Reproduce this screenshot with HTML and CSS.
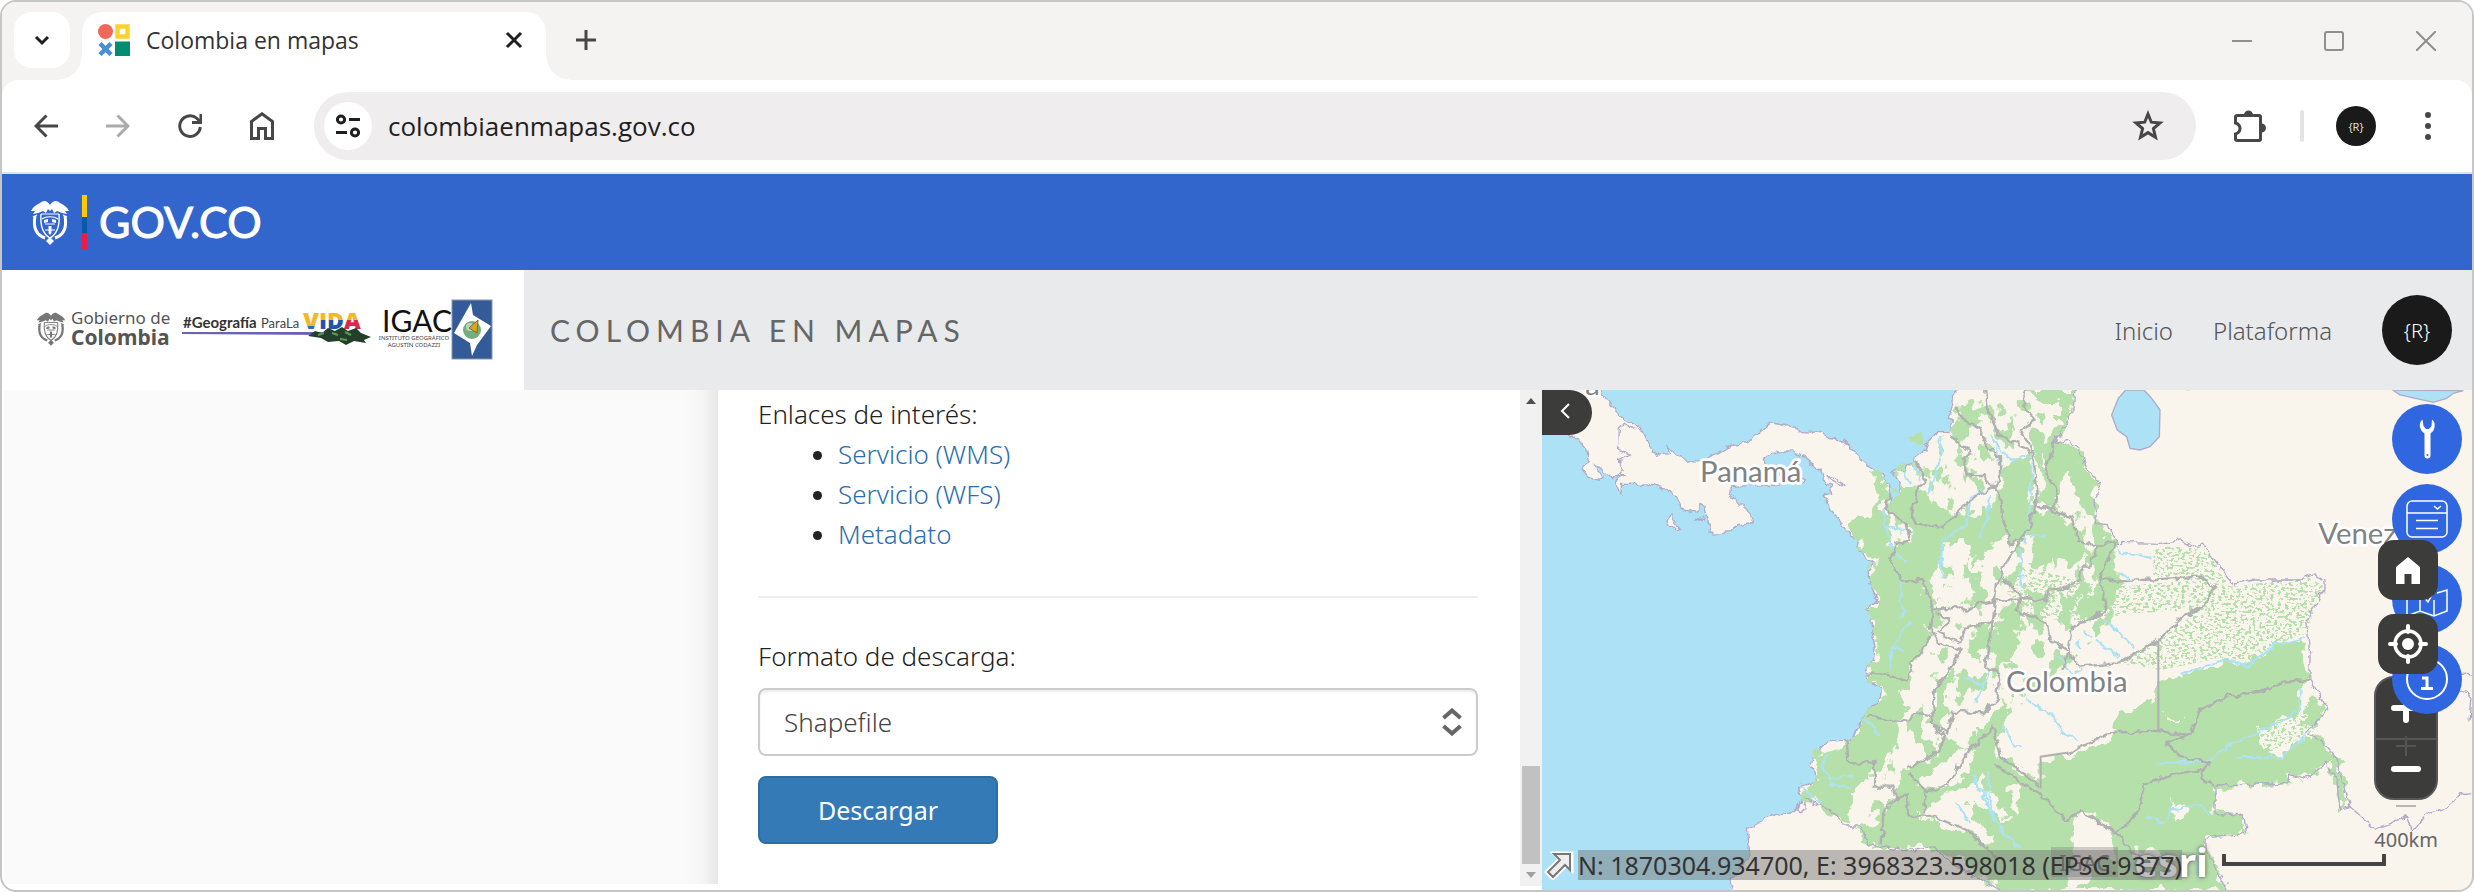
FILE: index.html
```html
<!DOCTYPE html>
<html lang="es">
<head>
<meta charset="utf-8">
<title>Colombia en mapas</title>
<link rel="stylesheet" href="styles.css">
</head>
<body>
<svg class="defs" aria-hidden="true">
  <defs>
    <symbol id="arms" viewBox="0 0 40 46">
      <path d="M20 6 C17 1 13 1 10 4 C6 6 3 8 1 12 L5 12 L3 15 L8 14 L13 12 L16 14 L18 10 L20 12 L22 10 L24 14 L27 12 L32 14 L37 15 L35 12 L39 12 C37 8 34 6 30 4 C27 1 23 1 20 6Z" fill="currentColor"/>
      <path d="M3 18 L7 16 M37 18 L33 16 M11 15 L29 15 M12 20 C16 17 24 17 28 20 M15 25 H25 M15 31 H25" fill="none" stroke="currentColor" stroke-width="1.2"/>
      <path d="M11 15 C10 27 13 35 20 39 C27 35 30 27 29 15" fill="none" stroke="currentColor" stroke-width="1.4"/>
      <path d="M5 17 C3 28 6 36 15 39 M35 17 C37 28 34 36 25 39" fill="none" stroke="currentColor" stroke-width="3"/>
      <path d="M14 21 L18 20 L18 23 L14 24Z M26 21 L22 20 L22 23 L26 24Z M18.500 27 H21.500 V34 L20 36 L18.500 34Z M20 38 L24 42 L20 46 L16 42Z" fill="currentColor"/>
    </symbol>
    <linearGradient id="vida-v" x2="0" y2="1"><stop offset="0.7" stop-color="#f7b52c"/><stop offset="0.7" stop-color="#2f6bb8"/></linearGradient>
    <linearGradient id="vida-d" x2="0" y2="1"><stop offset="0.5" stop-color="#f7b52c"/><stop offset="0.5" stop-color="#1e57a8"/></linearGradient>
    <linearGradient id="vida-a" x2="0" y2="1"><stop offset="0.5" stop-color="#f7b52c"/><stop offset="0.5" stop-color="#d8294a"/></linearGradient>
  </defs>
</svg>

<div class="window">
  <header class="tabstrip">
    <button class="tab-search" aria-label="Buscar pestañas">
      <svg width="20" height="20" viewBox="0 0 20 20"><path d="M4 7 L10 13 L16 7" class="ink-thick"/></svg>
    </button>
    <div class="tab">
      <svg class="favicon" width="32" height="32" viewBox="0 0 32 32">
        <circle cx="7.500" cy="7.500" r="7.500" fill="#f0685a"/>
        <path d="M19.500 2.500 H29.500 V12.500 H19.500Z" fill="#fff" stroke="#fdd22f" stroke-width="4.500"/>
        <path d="M2 19.500 L13 30.500 M13 19.500 L2 30.500" stroke="#4a8fd4" stroke-width="4.500"/>
        <path d="M17 17.500 H32 V32 H17Z" fill="#018d70"/>
      </svg>
      <span class="tab-title">Colombia en mapas</span>
      <button class="plain" aria-label="Cerrar pestaña">
        <svg width="24" height="24" viewBox="0 0 24 24"><path d="M5 5 L19 19 M19 5 L5 19" class="ink-thick"/></svg>
      </button>
    </div>
    <button class="plain new-tab" aria-label="Nueva pestaña">
      <svg width="24" height="24" viewBox="0 0 24 24"><path d="M12 2 V22 M2 12 H22" class="ink"/></svg>
    </button>
    <div class="window-controls">
      <button class="plain" aria-label="Minimizar"><svg width="20" height="20" viewBox="0 0 20 20"><path d="M0 10 H20" class="ctl"/></svg></button>
      <button class="plain" aria-label="Maximizar"><svg width="20" height="20" viewBox="0 0 20 20"><rect x="1" y="1" width="18" height="18" rx="2" class="ctl"/></svg></button>
      <button class="plain" aria-label="Cerrar"><svg width="20" height="20" viewBox="0 0 20 20"><path d="M0 0 L20 20 M20 0 L0 20" class="ctl"/></svg></button>
    </div>
  </header>

  <div class="toolbar-bg">
    <div class="toolbar">
      <div class="nav-buttons">
        <button class="plain" aria-label="Atrás"><svg width="24" height="28" viewBox="0 0 24 28"><path d="M24 14 H2 M12.500 3.500 L2 14 L12.500 24.500" class="ink"/></svg></button>
        <button class="plain faded" aria-label="Adelante"><svg width="24" height="28" viewBox="0 0 24 28"><path d="M0 14 H22 M11.500 3.500 L22 14 L11.500 24.500" class="ink"/></svg></button>
        <button class="plain" aria-label="Recargar"><svg width="24" height="28" viewBox="0 0 24 28"><path d="M22.300 15 A10.300 10.300 0 1 1 19 6.500 L22 9.500 M23 2 V10.500 H14" class="ink"/></svg></button>
        <button class="plain" aria-label="Inicio"><svg width="24" height="28" viewBox="0 0 24 28"><path d="M1.500 9.500 L12 1.800 L22.500 9.500 V26.500 H15.500 V16.500 H8.500 V26.500 H1.500Z" class="ink"/></svg></button>
      </div>
      <div class="omnibox">
        <button class="site-info" aria-label="Información del sitio">
          <svg width="24" height="24" viewBox="0 0 24 24"><path d="M13 5.500 H24 M0 18.500 H11" class="ink-thick"/><circle cx="5" cy="5.500" r="3.600" class="ink-thick"/><circle cx="19" cy="18.500" r="3.600" class="ink-thick"/></svg>
        </button>
        <input class="url" type="text" aria-label="Dirección" value="colombiaenmapas.gov.co">
        <button class="plain" aria-label="Guardar en favoritos">
          <svg width="32" height="32" viewBox="0 0 32 32"><path d="M16 4 L19.300 12.200 L28 12.900 L21.400 18.600 L23.500 27.200 L16 22.600 L8.500 27.200 L10.600 18.600 L4 12.900 L12.700 12.200Z" class="star"/></svg>
        </button>
      </div>
      <button class="plain ext" aria-label="Extensiones">
        <svg width="32" height="32" viewBox="0 0 32 32"><path d="M3.500 5.500 H25 Q26.500 5.500 26.500 7 V29 Q26.500 30.500 25 30.500 H3.500 Q1.500 30.500 1.500 29 V24 Q6 22.500 6 18.500 T1.500 13 V7 Q1.500 5.500 3.500 5.500Z" class="ink"/><path d="M10 5 A4.500 4.500 0 0 1 19 5Z M27.500 13.500 A4.500 4.500 0 0 1 27.500 22.500Z" fill="#474747"/></svg>
      </button>
      <span class="divider"></span>
      <button class="profile" aria-label="Perfil">{R}</button>
      <button class="plain" aria-label="Menú">
        <svg width="8" height="28" viewBox="0 0 8 28"><g fill="#474747"><circle cx="4" cy="3" r="3"/><circle cx="4" cy="14" r="3"/><circle cx="4" cy="25" r="3"/></g></svg>
      </button>
    </div>
  </div>

  <div class="govbar">
    <svg class="gov-arms" width="40" height="46"><use href="#arms"/></svg>
    <span class="gov-flag"></span>
    <span class="gov-name">GOV.CO</span>
  </div>

  <div class="sitebar">
    <div class="brand">
      <svg class="brand-art" width="462" height="64" viewBox="0 0 462 64" role="img" aria-label="Gobierno de Colombia, IGAC">
        <svg x="2" y="13" width="30" height="35" color="#777"><use href="#arms"/></svg>
        <g class="brand-gov"><text x="37" y="26">Gobierno de</text><text x="37" y="47" class="strong">Colombia</text></g>
        <text x="149" y="30" class="brand-tag strong">#Geografía</text>
        <text x="227" y="30" class="brand-para">ParaLa</text>
        <path d="M148 34 H290 V37 L148 36Z" fill="#6c62b4"/>
        <g class="brand-vida"><text x="269" y="31" fill="url(#vida-v)">V</text><text x="285" y="31" fill="url(#vida-d)">I</text><text x="293" y="31" fill="url(#vida-d)">D</text><text x="310" y="31" fill="url(#vida-a)">A</text></g>
        <path d="M274 38 L281 33 L288 35 L294 30 L301 33 L308 29 L314 33 L322 30 L327 35 L337 39 L330 42 L332 45 L320 43 L312 47 L305 43 L294 44 L287 40Z" fill="#23402a"/>
        <path d="M284 37 L290 35 M298 35 L304 37 M311 34 L317 37 M306 41 L313 42" stroke="#5f9b4c" stroke-width="2"/>
        <text x="348" y="34" class="brand-igac">IGAC</text>
        <text x="380" y="42" class="brand-sub">INSTITUTO GEOGRÁFICO</text>
        <text x="380" y="49" class="brand-sub">AGUSTÍN CODAZZI</text>
        <g transform="translate(30 0)">
          <rect x="388" y="2" width="40" height="59" fill="#335b97" stroke="#8c96a8"/>
          <path d="M407 5 L409 17 L427 28 L413 47 L408 58 L406 45 L390 35Z" fill="#fff"/>
          <circle cx="408" cy="32" r="9" fill="#74ad80"/><circle cx="406" cy="29" r="4" fill="#b9d6bc"/>
          <path d="M405 30 L414 22 L413 35Z" fill="#dba51f" stroke="#7d6a20"/>
        </g>
      </svg>
    </div>
    <h1 class="site-title">COLOMBIA EN MAPAS</h1>
    <nav class="site-nav">
      <a href="#">Inicio</a>
      <a href="#">Plataforma</a>
      <button class="user">{R}</button>
    </nav>
  </div>

  <main class="content">
    <div class="side"></div>
    <section class="panel">
      <p class="line">Enlaces de interés:</p>
      <ul class="links">
        <li><a href="#">Servicio (WMS)</a></li>
        <li><a href="#">Servicio (WFS)</a></li>
        <li><a href="#">Metadato</a></li>
      </ul>
      <hr class="rule">
      <label class="line" for="formato">Formato de descarga:</label>
      <div class="select-wrap">
        <select id="formato" class="select"><option>Shapefile</option></select>
        <svg class="select-arrows" width="20" height="28" viewBox="0 0 20 28"><path d="M1.500 10 L10 2.500 L18.500 10 M1.500 18 L10 25.500 L18.500 18"/></svg>
      </div>
      <button class="download">Descargar</button>
    </section>
    <div class="scrollbar" aria-hidden="true">
      <svg width="10" height="6" viewBox="0 0 10 6"><path d="M0 6 L5 0 L10 6Z" fill="#505050"/></svg>
      <span class="thumb"></span>
      <svg width="10" height="6" viewBox="0 0 10 6"><path d="M0 0 L5 6 L10 0Z" fill="#a0a0a0"/></svg>
    </div>

    <section class="map" aria-label="Mapa">
      <svg class="map-art" viewBox="126 30 2790 1500" preserveAspectRatio="xMidYMin slice">
        <defs>
          <filter id="rough" x="0" y="0" width="2916" height="1530" filterUnits="userSpaceOnUse">
            <feTurbulence type="fractalNoise" baseFrequency="0.025" numOctaves="3" seed="4"/>
            <feDisplacementMap in="SourceGraphic" scale="60" xChannelSelector="R" yChannelSelector="G"/>
          </filter>
          <filter id="wobble" x="0" y="0" width="2916" height="1530" filterUnits="userSpaceOnUse">
            <feTurbulence type="fractalNoise" baseFrequency="0.04" numOctaves="2" seed="9"/>
            <feDisplacementMap in="SourceGraphic" scale="24" xChannelSelector="R" yChannelSelector="G"/>
          </filter>
          <filter id="speckle" x="0" y="0" width="2916" height="1530" filterUnits="userSpaceOnUse" color-interpolation-filters="sRGB">
            <feTurbulence type="fractalNoise" baseFrequency="0.09 0.13" numOctaves="2" seed="3"/>
            <feColorMatrix values="0 0 0 0 0.71  0 0 0 0 0.88  0 0 0 0 0.67  16 0 0 0 -8.500"/>
            <feComposite in2="SourceGraphic" operator="in"/>
          </filter>
          <filter id="patches" x="0" y="0" width="2916" height="1530" filterUnits="userSpaceOnUse" color-interpolation-filters="sRGB">
            <feTurbulence type="fractalNoise" baseFrequency="0.022 0.016" numOctaves="4" seed="12"/>
            <feColorMatrix values="0 0 0 0 0.71  0 0 0 0 0.88  0 0 0 0 0.67  30 0 0 0 -17.200"/>
            <feComposite in2="SourceGraphic" operator="in"/>
          </filter>
        </defs>
        <rect x="126" y="30" width="2790" height="1500" fill="#ade1f5"/>
        <path class="land" d="M300 20 L302 42 340 85 365 112 400 135 430 155 445 190 455 215 480 225 510 220 500 195 530 225 560 243 600 242 640 228 680 200 740 188 770 165 812 128 850 135 890 142 895 155 960 157 1000 175 1030 185 1060 210 1085 240 1112 262 1140 280 1165 310 1170 345 1178 372 1200 365 1200 310 1175 272 1210 268 1240 240 1275 210 1285 180 1310 155 1350 155 1360 120 1345 115 1362 70 1365 20 2930 20 2930 1540 700 1540 690 1500 750 1430 742 1345 790 1320 830 1305 870 1300 895 1280 910 1255 895 1220 950 1205 935 1150 945 1115 985 1085 1040 1085 1060 1075 1080 1030 1100 1000 1140 960 1145 925 1105 895 1095 875 1120 845 1125 800 1115 750 1112 695 1095 690 1115 680 1132 660 1105 600 1105 570 1120 550 1100 535 1070 505 1075 485 1045 455 1025 430 990 385 970 345 995 340 990 315 970 300 960 270 920 240 880 213 830 213 790 240 800 262 860 300 830 312 690 320 690 345 740 385 757 415 755 430 705 440 690 455 635 460 625 425 615 375 600 370 590 400 545 390 525 345 490 325 440 312 365 313 362 345 345 305 370 290 330 290 285 255 310 300 265 290 248 270 265 240 260 210 235 180 205 160 110 130 110 20Z"/>
        <path class="land" d="M515 403 L525 430 538 445 510 445 500 420Z M585 420 L612 410 608 418Z M900 288 L916 300 908 314 896 308Z M980 290 L1005 292 1033 320 1010 308Z"/>
        <path class="coast" d="M345 305 L370 270 358 240 388 225 355 205 358 145 370 130 400 145 M905 1255 L890 1290 905 1300 912 1265"/>

        <path class="patches" d="M1200 180 L1500 60 1620 60 1700 200 1850 480 1840 720 1700 860 1520 1010 1400 1230 1250 1380 1100 1330 1150 1160 1290 900 1270 600 1160 430Z"/>
        <g class="forest">
          <path d="M1112 262 L1150 300 1172 340 1150 385 1165 430 1180 500 1200 600 1270 600 1300 690 1280 720 1295 780 1250 830 1230 890 1205 940 1225 1000 1190 1030 1180 1100 1130 1180 1100 1200 1060 1230 1050 1300 1060 1335 1035 1335 990 1290 920 1255 905 1220 960 1200 942 1150 955 1115 1000 1100 1050 1085 1070 1070 1090 1030 1105 1000 1150 960 1150 925 1110 895 1105 875 1128 845 1132 800 1120 750 1118 695 1110 690 1125 680 1138 660 1112 600 1115 570 1125 550 1105 535 1080 505 1082 485 1050 455 1070 400 1090 415 1120 390 1145 355 1112 300Z"/>
          <path d="M1205 310 L1245 320 1300 350 1320 395 1390 410 1440 400 1500 350 1520 470 1460 510 1430 560 1410 490 1350 490 1320 540 1290 600 1200 600 1175 520 1195 490 1235 480 1220 440 1165 400Z"/>
          <path d="M1365 80 L1420 60 1450 110 1400 150Z M1580 30 L1725 30 1710 120 1670 185 1655 280 1630 310 1630 190 1680 130 1680 60 1610 60Z"/>
          <path d="M1660 190 L1710 185 1760 270 1795 300 1785 370 1790 435 1825 440 1845 490 1850 600 1800 620 1780 560 1780 500 1820 470 1750 390 1710 280 1670 330 1650 390 1630 310Z"/>
          <path d="M1510 260 L1560 230 1595 240 1600 380 1680 410 1730 440 1750 490 1770 510 1730 560 1670 540 1620 570 1595 530 1610 490 1590 460 1530 490 1505 420 1490 350Z"/>
          <path d="M1800 610 L1850 600 1870 620 1820 700 1740 720 1715 700Z M1530 650 L1570 670 1550 790 1520 850 1490 870 1490 760Z M1430 730 L1480 730 1440 840 1405 830Z"/>
          <path d="M1340 870 L1370 870 1340 950 1330 1050 1290 1030 1300 950Z M1500 960 L1530 980 1500 1060 1480 1140 1430 1230 1280 1290 1250 1310 1180 1240 1220 1160 1300 1150 1330 1060 1400 1110Z"/>
          <path d="M1180 1250 L1220 1240 1240 1310 1320 1330 1400 1350 1440 1380 1440 1440 1350 1420 1250 1400 1150 1410 1095 1390 1080 1350 1150 1310Z"/>
          <path d="M1980 905 L2050 880 2180 840 2250 858 2320 795 2415 780 2430 900 2402 930 2400 990 2350 1030 2270 1045 2280 1100 2340 1130 2420 1065 2460 1085 2505 1130 2550 1275 2520 1290 2510 1190 2480 1145 2440 1170 2405 1200 2365 1180 2365 1210 2145 1215 2140 1300 2230 1305 2240 1365 2115 1372 2115 1400 2180 1530 1500 1530 1380 1440 1400 1350 1450 1390 1480 1370 1390 1290 1350 1260 1440 1160 1480 1130 1580 1180 1625 1210 1625 1135 1720 1130 1850 1060 1830 1040 1880 1000 1970 960Z"/>
          <path d="M2420 960 L2450 940 2480 985 2430 1040 2410 1050Z"/>
        </g>
        <path class="clearing" d="M1720 1290 Q1760 1280 1790 1310 L1830 1370 1860 1450 1800 1440 1730 1530 1700 1530 1725 1400Z M1440 1180 L1480 1240 1530 1330 1470 1300 1400 1260Z M1520 1220 L1560 1230 1545 1310Z M1990 1010 L2040 1010 2040 1020 1990 1020Z M1890 1410 L1950 1400 1990 1430 1920 1440Z M2010 1250 L2060 1290 2030 1330Z"/>
        <path class="clearing" d="M1330 490 L1410 490 1400 560 1330 560Z M1420 360 L1460 360 1450 420 1420 400Z M1340 1130 L1440 1100 1400 1190 1320 1220 1250 1210Z M1350 1230 L1420 1220 1400 1320 1280 1300Z"/>
        <path class="speckle" d="M1830 620 L2100 600 2200 620 2420 590 2475 620 2445 680 2420 760 2310 800 2250 850 2180 830 1980 870 1850 850 1990 770 2100 690 1900 700 1770 720Z M1960 500 L2110 500 2190 610 1960 590Z M2270 1040 L2400 1000 2480 960 2450 1050 2300 1120Z M1560 560 L1830 620 1760 720 1640 720 1520 640Z"/>

        <path class="river" d="M1320 165 L1325 220 1310 280 1282 350 M1412 350 L1400 430 1330 480 1322 540 1328 595 M1470 345 L1465 410 1435 475 M1150 390 L1155 430 1175 500 1215 550 M1160 440 L1240 455 M1205 610 L1200 660 1215 690 1200 715 M1230 725 L1180 800 1165 870 M1185 800 L1210 815 M985 1120 L965 1160 1000 1215 1050 1225 M980 1195 L1055 1190 M905 1220 L960 1270 M1095 1020 L1135 1060 M1470 870 L1455 910 1428 965 M1390 890 L1430 910 1455 910 M1420 1185 L1470 1270 1500 1350 M1465 1180 L1470 1260 M1370 1270 L1410 1330 M1210 270 L1230 315 M1240 250 L1260 300"/>
        <path class="river" d="M1470 160 L1510 220 1545 245 1600 220 M1480 170 L1505 260 M1595 240 L1590 430 1570 490 M1500 310 L1410 350 M1562 510 L1565 620 M1810 715 L1850 750 1905 805 M1750 750 L1775 770 M1790 785 L1860 830 M1730 780 L1735 805 M1660 820 L1720 880 1750 865 M1580 960 L1650 1000 1690 1060 1740 1080 M1510 1030 L1540 1095 1565 1100 M1420 1190 L1490 1330 1560 1410 M2045 880 L2180 840 2250 858 2320 795 2415 775 M2402 925 L2400 990 2330 1030 2240 1070 2165 1110 2120 1145 1975 1150 M2210 1130 L2350 1135 2415 1065 M1945 1310 L1990 1330 2020 1290 2100 1275 2130 1310 M1855 495 L1865 520 1955 530 M1860 580 L1890 600 M1590 470 L1635 465"/>
        <path class="lake" d="M1877 30 L1932 30 1955 55 1980 90 1978 170 1950 200 1920 210 1890 205 1880 170 1852 150 1835 105 1855 55Z M2678 30 L2700 45 2800 67 2840 55 2860 40 2890 32Z"/>

        <g class="dept">
          <path d="M1455 30 L1460 80 1500 170 1550 190 1600 220 1610 350 1590 440 1520 545 1490 620 1475 750 1455 860 1500 880 1490 960 1450 1000 1360 995 1340 1060 1295 1030 1305 930 1385 810 1320 790 1290 740 1300 690 1270 600 1205 605 1170 540 1190 490 1230 485 1220 430 1155 385 1172 345"/>
          <path d="M1370 85 L1390 120 1440 145 1460 200 1500 230 1500 310 1430 345 1370 400 1325 440 1250 435 1235 410 1250 335 1275 300 1245 240 M1350 165 L1415 215 1390 240 1400 285 1450 285 1470 310 1505 360 1510 420 1530 490 1580 465"/>
          <path d="M1580 30 L1565 60 1600 120 1560 150 1600 215 M1660 190 L1635 280 1670 330 1665 385 1610 380 1710 410 1740 480 1790 500 1845 485 M1790 500 L1770 560 1745 560 1740 600 1690 630 1650 625 1640 665 1560 650 1510 590"/>
          <path d="M1845 490 L1800 590 1850 605 2100 590 2145 620 2110 680 2050 710 1975 780 1850 850 1740 860 1705 815 1720 740 1820 690 1800 590 M1705 815 L1690 870 M1305 690 L1360 680 1400 695 1440 670 1560 655 1550 690 1640 730 1650 780 1700 810 M1310 700 L1350 720 1315 760 1380 790 1395 745 1480 725"/>
          <path d="M1100 880 L1170 885 1220 905 1240 870 1230 850 1260 820 1295 760 M1100 1010 L1220 1025 1245 1000 1295 1010 M1040 1085 L1045 1145 1075 1155 1105 1140 1125 1150 1125 1220 1180 1220 1190 1250 1150 1300 1145 1390 M1190 1255 L1220 1245 1225 1310 1300 1310 1400 1350 1440 1390 1490 1430 M1225 1180 L1280 1235 1340 1215 1400 1120 1480 1040 1500 1130 1620 1220 M1280 1235 L1270 1300 M1225 1165 L1320 1110 1330 1065 1300 1040"/>
          <path d="M1700 1120 L1820 1060 1960 1052 2070 1065 2100 990 2180 950 2280 935 2350 905 2430 900 M2070 1065 L1995 1090 2050 1135 2125 1145 2100 1190 2140 1215 M2105 1170 L2000 1190 1935 1215 1915 1290 1850 1360 1740 1290 1700 1325 1640 1260 1480 1150 M1850 1360 L1900 1420 1990 1460"/>
        </g>
        <path class="meridian" d="M1975 785 V1052 M1622 1225 V1130 L1700 1118"/>
        <path class="coast" d="M1725 30 L1718 100 1660 190 1710 180 1735 205 1760 270 1800 310 1785 360 1790 437 1825 440 1850 487 1980 490 2040 480 2080 500 2110 495 2200 612 2260 600 2400 600 2440 585 2475 600 2475 630 2445 680 2420 720 2430 830 2430 900 2485 985 2415 1060 2460 1080 2505 1130 2550 1280 2520 1288 2510 1200 2480 1145 2420 1195 2365 1180 2365 1210 2145 1215 2145 1300 2230 1305 2240 1360 2115 1372 2115 1400 2180 1530 M910 1255 L990 1290 1035 1335 1075 1335 1095 1360 1100 1393 1240 1412 1300 1400 1370 1460 1500 1530 M2550 1280 L2625 1345 2670 1330 2720 1310 2735 1355 2780 1300 2840 1280 2880 1245 2916 1240 M2880 882 L2916 885 M2880 930 L2916 950 2910 1025"/>
        <g class="place">
          <text x="600" y="305">Panamá</text>
          <text x="1518" y="937">Colombia</text>
          <text x="2455" y="493">Venezuela</text>
          <text x="256" y="46">a</text>
        </g>
      </svg>

      <button class="collapse" aria-label="Contraer panel"><svg width="10" height="16" viewBox="0 0 10 16"><path d="M9 1 L2 8 L9 15"/></svg></button>

      <div class="zoom">
        <button aria-label="Acercar"><svg width="30" height="30" viewBox="0 0 30 30"><path d="M3 15 H27 M15 3 V27"/></svg></button>
        <button aria-label="Alejar"><svg width="30" height="30" viewBox="0 0 30 30"><path d="M3 15 H27"/></svg></button>
        <svg class="zoom-ghost" width="20" height="72" viewBox="0 0 20 72"><path d="M0 11 H20 M10 1 V21" stroke="#555"/><path d="M0 71 H20" stroke="#b8b6b2"/></svg>
      </div>

      <div class="tools">
        <button aria-label="Herramientas"><svg width="20" height="42" viewBox="0 0 20 42"><path d="M5.500 1.500 Q2 4 3 9.500 Q3.800 13 7.500 15.500 V37.500 Q7.500 40.500 10.500 40.500 Q13.500 40.500 13.500 37.500 V15.500 Q17 13 17.500 9.500 Q18.500 4 15 1.500 L14.500 8 L12 11 H9 L6.500 8Z" fill="#fff"/><circle cx="10.500" cy="37" r="1" fill="#3067e0"/></svg></button>
        <button aria-label="Leyenda"><svg width="42" height="38" viewBox="0 0 42 38" class="thin"><rect x="1" y="1" width="40" height="36" rx="5"/><path d="M1 13 H41 M10 20.500 H32 M10 28.500 H32 M28 6 L31.500 9 L35 6"/></svg></button>
        <button aria-label="Mapas"><svg width="42" height="42" viewBox="0 0 42 42" class="thin"><path d="M1 12 V38 L14 33 L28 38 L41 33 V12 L31 15 M14 18 V33 M28 22 V38 M16 17 L22 24 L30 10"/></svg></button>
        <button aria-label="Información"><svg width="42" height="42" viewBox="0 0 42 42" class="info"><circle cx="21" cy="21" r="20"/><path d="M16 20 H21 V30 M15 30.500 H27 M19 12.500 H22"/></svg></button>
      </div>

      <div class="quick">
        <button aria-label="Vista inicial"><svg width="26" height="28" viewBox="0 0 26 28"><path d="M1 11 L13 1 L25 11 V28 H16.500 V18 H9.500 V28 H1Z" fill="#fff"/></svg></button>
        <button aria-label="Mi ubicación"><svg width="40" height="40" viewBox="0 0 40 40"><circle cx="20" cy="20" r="13" fill="none" stroke="#fff" stroke-width="3.500"/><circle cx="20" cy="20" r="6" fill="#fff"/><path d="M20 2 V8 M20 32 V38 M2 20 H8 M32 20 H38" stroke="#fff" stroke-width="4" stroke-linecap="round"/></svg></button>
      </div>

      <div class="attribution">
        <span class="source">IGAC</span>
        <span class="esri">esri</span>
      </div>
      <div class="coords">
        <svg width="30" height="30" viewBox="0 0 30 30"><path d="M9 3 H28 V21 L22 16 L9 29 L2 22 L15 9Z" fill="#f4f4f4" stroke="#fff" stroke-width="3"/><path d="M10 4 H26 V20 L21 15 L9 27 L4 22 L16 10Z" fill="#eee" stroke="#777" stroke-width="2"/></svg>
        <span class="coords-text">N: 1870304.934700, E: 3968323.598018 (EPSG:9377)</span>
      </div>
      <div class="scale"><span class="scale-label">400km</span><span class="scale-line"></span></div>
    </section>
  </main>
</div>
</body>
</html>
```

FILE: styles.css
```css
* { box-sizing: border-box; }

body {
  margin: 0;
  background: #fff;
  color: #333;
  font-family: "Noto Sans", "Open Sans", sans-serif;
  font-size: 26px;
}

button, input, select { font: inherit; }
button { padding: 0; border: 0; cursor: pointer; }
svg { display: block; flex: none; }
a { text-decoration: none; }

.defs { position: absolute; width: 0; height: 0; }

.window {
  display: flex;
  flex-direction: column;
  min-height: 100vh;
  border: 2px solid #c6c6c6;
  border-radius: 16px;
  background: #fff;
  overflow: hidden;
}

.plain {
  display: grid;
  place-items: center;
  flex: none;
  background: none;
}
.ink { fill: none; stroke: #474747; stroke-width: 3; }
.ink-thick { fill: none; stroke: #1f1f1f; stroke-width: 3; }
.ctl { fill: none; stroke: #8f8f8f; stroke-width: 2; }
.star { fill: none; stroke: #474747; stroke-width: 3; }
.faded { opacity: 0.45; }

/* Browser chrome */
.tabstrip {
  display: flex;
  height: 78px;
  padding: 10px 36px 0 12px;
  background: #f4f3f1;
}
.tab-search {
  display: grid;
  place-items: center;
  width: 56px;
  height: 56px;
  margin-right: 12px;
  border-radius: 18px;
  background: #fff;
}
.tab {
  position: relative;
  display: flex;
  align-items: center;
  width: 464px;
  padding: 0 20px 12px 16px;
  border-radius: 20px 20px 0 0;
  background: #fff;
}
.tab::before, .tab::after {
  content: "";
  position: absolute;
  bottom: 0;
  width: 24px;
  height: 24px;
}
.tab::before {
  right: 100%;
  background: radial-gradient(circle at 0 0, transparent 23px, #fff 24px);
}
.tab::after {
  left: 100%;
  background: radial-gradient(circle at 100% 0, transparent 23px, #fff 24px);
}
.tab-title {
  flex: 1;
  margin-left: 16px;
  color: #333;
  font-family: "Open Sans", sans-serif;
  font-size: 23px;
}
.new-tab { height: 56px; margin-left: 28px; }
.window-controls {
  display: flex;
  gap: 72px;
  height: 58px;
  margin-left: auto;
}

.toolbar-bg { background: #f4f3f1; }
.toolbar {
  display: flex;
  align-items: center;
  height: 94px;
  padding: 0 40px 0 32px;
  border-bottom: 2px solid #dfe3e3;
  border-radius: 16px 16px 0 0;
  background: #fff;
}
.nav-buttons { display: flex; gap: 48px; margin-right: 40px; }
.omnibox {
  display: flex;
  align-items: center;
  flex: 1;
  height: 68px;
  padding: 0 32px 0 10px;
  border-radius: 34px;
  background: #efedee;
}
.site-info {
  display: grid;
  place-items: center;
  width: 48px;
  height: 48px;
  border-radius: 50%;
  background: #fff;
}
.url {
  flex: 1;
  min-width: 0;
  margin-left: 16px;
  padding: 0;
  border: 0;
  outline: 0;
  background: none;
  color: #1f1f1f;
  font-family: "Open Sans", sans-serif;
  font-size: 26px;
}
.ext { margin-left: 38px; }
.divider {
  width: 4px;
  height: 32px;
  margin: 0 32px 0 34px;
  border-radius: 2px;
  background: #e3e3e3;
}
.profile {
  width: 40px;
  height: 40px;
  margin-right: 48px;
  border-radius: 50%;
  background: #1a1a1a;
  color: #ddd;
  font-size: 11px;
}

/* Government and site bars */
.govbar {
  display: flex;
  align-items: center;
  height: 96px;
  padding-left: 28px;
  background: #3366cc;
  color: #fff;
}
.gov-flag {
  width: 5px;
  height: 54px;
  margin: 0 12px;
  background: linear-gradient(#fccb06 40%, #0a58a8 40% 70%, #ee1c45 70%);
}
.gov-name {
  font-family: "Lato", sans-serif;
  font-size: 43px;
  line-height: 48px;
  -webkit-text-stroke: 1px #fff;
}

.sitebar { display: flex; align-items: center; height: 120px; background: #e8eaec; }
.brand {
  display: flex;
  align-items: center;
  align-self: stretch;
  width: 522px;
  padding-left: 32px;
  background: #fff;
}
.brand-art { overflow: visible; }
.brand-art .strong { font-weight: 700; }
.brand-gov { fill: #555; font-size: 17px; }
.brand-gov .strong { font-size: 21px; }
.brand-tag { fill: #333; font-family: "Lato", sans-serif; font-size: 15px; }
.brand-para { fill: #444; font-family: "Lato", sans-serif; font-size: 13px; }
.brand-vida { font-weight: 800; font-size: 23px; font-family: "Open Sans", sans-serif; }
.brand-igac { fill: #111; font-family: "Lato", sans-serif; font-size: 30px; }
.brand-sub { fill: #444; font-size: 6px; text-anchor: middle; }
.site-title {
  margin: 0 0 0 26px;
  color: #666;
  font-family: "Lato", sans-serif;
  font-size: 30px;
  font-weight: 400;
  letter-spacing: 6px;
}
.site-nav {
  display: flex;
  align-items: center;
  gap: 40px;
  margin-left: auto;
  padding-right: 20px;
}
.site-nav a { color: #555; font-size: 24px; font-weight: 300; }
.user {
  width: 70px;
  height: 70px;
  margin-left: 10px;
  border-radius: 50%;
  background: #1a1a1a;
  color: #fff;
  font-size: 20px;
  font-weight: 300;
}

/* Download panel */
.content {
  display: grid;
  flex: 1;
  grid-template-columns: minmax(0, 716fr) minmax(0, 802fr) 22px minmax(0, 930fr);
}
.side {
  margin: 0 0 6px 2px;
  background: linear-gradient(to left, #e6e6e6, #f6f6f6 16px, #fafafa 36px);
}
.panel { padding: 4px 42px 40px 40px; background: #fff; color: #222; font-weight: 300; }
.line { display: block; margin: 0; line-height: 40px; }
.links { margin: 0 0 42px; padding-left: 80px; line-height: 40px; }
.links a { color: #2a6fae; }
.rule { height: 2px; margin: 0 0 38px; border: 0; background: #eee; }
.select-wrap { position: relative; margin: 12px 0 20px; }
.select {
  width: 100%;
  height: 68px;
  padding: 0 60px 0 24px;
  border: 2px solid #ccc;
  border-radius: 8px;
  background: #fff;
  box-shadow: inset 0 2px 2px rgba(0, 0, 0, 0.075);
  color: #444;
  appearance: none;
}
.select-arrows {
  position: absolute;
  top: 20px;
  right: 16px;
  fill: none;
  stroke: #666;
  stroke-width: 4;
  pointer-events: none;
}
.download {
  width: 240px;
  height: 68px;
  border: 2px solid #2e6da4;
  border-radius: 8px;
  background: #337ab7;
  color: #fff;
  font-size: 25px;
  font-weight: 400;
}
.scrollbar {
  display: flex;
  flex-direction: column;
  align-items: center;
  margin-bottom: 4px;
  padding: 8px 0;
  background: #f1f1f1;
}
.thumb { width: 18px; height: 98px; margin: auto 0 8px; background: #c1c1c1; }

/* Map */
.map { position: relative; overflow: hidden; background: #ade1f5; }
.map-art { position: absolute; width: 100%; height: 100%; }
.land { fill: #f9f4ec; stroke: #b0a9c8; stroke-width: 4; filter: url(#wobble); }
.coast { fill: none; stroke: #b0a9c8; stroke-width: 4; filter: url(#wobble); }
.forest { fill: #b5e0aa; filter: url(#rough); }
.clearing { fill: #f9f4ec; filter: url(#rough); }
.speckle { filter: url(#speckle); }
.patches { filter: url(#patches); }
.river { fill: none; stroke: #ade1f5; stroke-width: 6; filter: url(#wobble); }
.lake { fill: #ade1f5; stroke: #b0a9c8; stroke-width: 4; }
.dept { fill: none; stroke: #afb1b0; stroke-width: 7; stroke-linejoin: round; filter: url(#wobble); }
.meridian { fill: none; stroke: #afb1b0; stroke-width: 6; }
.place {
  fill: #828282;
  stroke: #fff;
  stroke-width: 16;
  stroke-linejoin: round;
  paint-order: stroke;
  font-family: "Lato", sans-serif;
  font-size: 88px;
}
.collapse {
  position: absolute;
  top: 0;
  left: 0;
  display: grid;
  place-items: center;
  width: 50px;
  height: 45px;
  padding-right: 4px;
  padding-bottom: 4px;
  border-radius: 0 24px 24px 0;
  background: #3c3c3a;
  fill: none;
  stroke: #fff;
  stroke-width: 2;
}
.tools {
  position: absolute;
  top: 14px;
  right: 10px;
  display: grid;
  gap: 10px;
}
.tools button {
  display: grid;
  place-items: center;
  width: 70px;
  height: 70px;
  border-radius: 50%;
  background: #3067e0;
}
.thin { fill: none; stroke: #fff; stroke-width: 1.5; }
.info { fill: none; stroke: #fff; stroke-width: 3; }
.info circle { stroke-width: 2; }
.quick {
  position: absolute;
  top: 150px;
  right: 34px;
  display: grid;
  gap: 14px;
}
.quick button {
  display: grid;
  place-items: center;
  width: 60px;
  height: 60px;
  border-radius: 16px;
  background: #3c3c3a;
}
.zoom {
  position: absolute;
  top: 286px;
  right: 34px;
  width: 64px;
  height: 124px;
  border: 2px solid #575759;
  border-radius: 20px;
  background: #3c3c3a;
}
.zoom button {
  display: grid;
  place-items: center;
  width: 60px;
  height: 60px;
  background: none;
  stroke: #fff;
  stroke-width: 6;
  stroke-linecap: round;
}
.zoom button + button { border-top: 2px solid #575759; }
.zoom-ghost { position: absolute; top: 57px; left: 20px; stroke-width: 2; }
.attribution {
  position: absolute;
  right: 264px;
  bottom: 6px;
  display: flex;
  align-items: center;
  gap: 16px;
}
.source {
  padding: 0 8px;
  background: rgba(110, 110, 110, 0.3);
  color: #666;
  font-size: 22px;
  line-height: 30px;
}
.esri {
  color: #fff;
  font-size: 40px;
  font-weight: 700;
  line-height: 44px;
  text-shadow: 0 0 3px #555, 0 0 6px #888;
}
.coords {
  position: absolute;
  left: 2px;
  bottom: 2px;
  display: flex;
  gap: 4px;
}
.coords-text {
  margin-bottom: 8px;
  background: rgba(110, 110, 110, 0.45);
  color: #333;
  font-size: 25px;
  line-height: 30px;
  white-space: nowrap;
}
.scale {
  position: absolute;
  right: 34px;
  bottom: 24px;
  width: 216px;
}
.scale-label { display: block; color: #666; font-size: 20px; line-height: 28px; text-align: right; }
.scale-line {
  display: block;
  width: 164px;
  height: 12px;
  border: 4px solid #444;
  border-top: 0;
}
```
